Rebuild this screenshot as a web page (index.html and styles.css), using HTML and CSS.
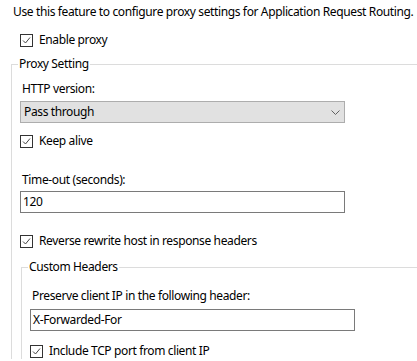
FILE: index.html
```html
<!DOCTYPE html>
<html lang="en">
<head>
  <meta charset="UTF-8">
  <title>Proxy</title>
  <link rel="stylesheet" href="styles.css">
</head>
<body>
  <div class="intro">Use this feature to configure proxy settings for Application Request Routing.</div>

  <div class="check-row enable">
    <span class="check"><svg width="11" height="11" viewBox="0 0 11 11"><polyline points="2,5.5 4.5,8 9,2.5" /></svg></span>
    <span>Enable proxy</span>
  </div>

  <fieldset class="group">
    <legend>Proxy Setting</legend>

    <div class="label http">HTTP version:</div>
    <div class="select">
      <span>Pass through</span>
      <svg width="9" height="5" viewBox="0 0 9 5"><polyline points="0.5,0.5 4.5,4.5 8.5,0.5" /></svg>
    </div>

    <div class="check-row keep">
      <span class="check"><svg width="11" height="11" viewBox="0 0 11 11"><polyline points="2,5.5 4.5,8 9,2.5" /></svg></span>
      <span>Keep alive</span>
    </div>

    <div class="label timeout">Time-out (seconds):</div>
    <div class="textbox">120</div>

    <div class="check-row reverse">
      <span class="check"><svg width="11" height="11" viewBox="0 0 11 11"><polyline points="2,5.5 4.5,8 9,2.5" /></svg></span>
      <span>Reverse rewrite host in response headers</span>
    </div>

    <fieldset class="group inner">
      <legend>Custom Headers</legend>

      <div class="label preserve">Preserve client IP in the following header:</div>
      <div class="textbox">X-Forwarded-For</div>

      <div class="check-row tcp">
        <span class="check"><svg width="11" height="11" viewBox="0 0 11 11"><polyline points="2,5.5 4.5,8 9,2.5" /></svg></span>
        <span>Include TCP port from client IP</span>
      </div>
    </fieldset>
  </fieldset>
</body>
</html>
```

FILE: styles.css
```css
body {
  margin: 0;
  background: #fff;
  color: #000;
  font-family: 'Noto Sans', sans-serif;
  font-size: 12px;
  line-height: 16px;
  letter-spacing: -0.37px;
  overflow: hidden;
}
.intro {
  margin-top: 4px;
  padding-left: 13px;
  white-space: nowrap;
}
.check-row {
  display: flex;
  align-items: center;
  height: 16px;
  gap: 6px;
}
.check {
  width: 13px;
  height: 13px;
  box-sizing: border-box;
  border: 1px solid #333;
  background: #fff;
  display: flex;
  align-items: center;
  justify-content: center;
}
.check polyline {
  fill: none;
  stroke: #444;
  stroke-width: 1;
}
.enable {
  margin-top: 12px;
  margin-left: 20px;
}
.group {
  margin: 8px 0 0 11px;
  padding: 0 0 0 8px;
  border: 1px solid #dcdcdc;
  border-right: none;
  border-bottom: none;
  min-width: 0;
}
.group legend {
  padding: 0 1px;
  margin-left: -2px;
  height: 16px;
}
.label {
  height: 16px;
  padding-left: 2px;
}
.http {
  margin-top: 9px;
}
.select {
  margin-top: 4px;
  width: 325px;
  height: 22px;
  box-sizing: border-box;
  border: 1px solid #adadad;
  background: #e1e1e1;
  display: flex;
  align-items: center;
  justify-content: space-between;
  padding: 0 4px 0 3px;
}
.select polyline {
  fill: none;
  stroke: #606060;
  stroke-width: 1;
}
.keep {
  margin-top: 10px;
}
.timeout {
  margin-top: 23px;
}
.textbox {
  margin-top: 3px;
  width: 325px;
  height: 22px;
  box-sizing: border-box;
  border: 1px solid #7a7a7a;
  padding: 2px 2px;
  line-height: 16px;
}
.reverse {
  margin-top: 20px;
}
.group.inner {
  margin: 10px 0 0 1px;
}
.preserve {
  margin-top: 13px;
}
.inner .textbox {
  margin-top: 5px;
}
.tcp {
  margin-top: 12px;
}
```
